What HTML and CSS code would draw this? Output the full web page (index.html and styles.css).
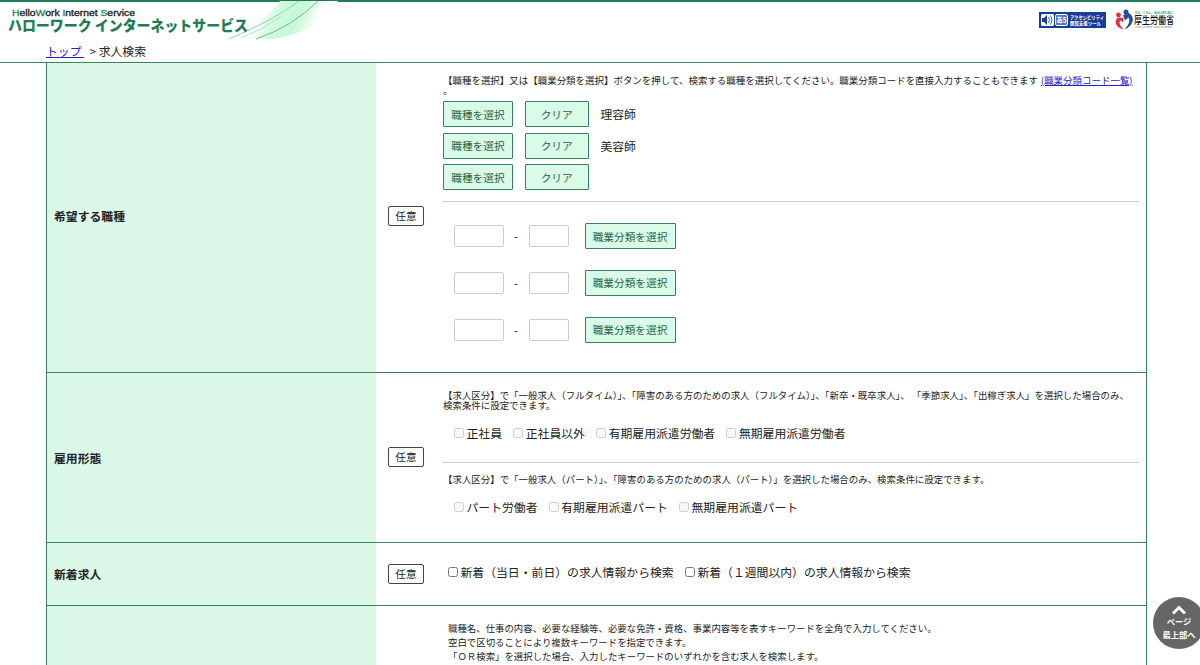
FILE: index.html
```html
<!DOCTYPE html>
<html lang="ja">

<head>
  <meta charset="UTF-8">
  <meta name="viewport" content="width=device-width, initial-scale=1.0">
  <title>求人検索 - ハローワーク インターネットサービス</title>
  <link rel="stylesheet" href="styles.css">
</head>

<body>
  <header class="header">
    <div class="header-top">
      <svg class="site-logo" width="340" height="40" viewBox="0 0 340 40">
        <defs>
          <linearGradient id="wave" gradientUnits="userSpaceOnUse" x1="262" y1="8" x2="312" y2="32">
            <stop offset="0" stop-color="#fff" />
            <stop offset="0.3" stop-color="#d2f9e0" />
            <stop offset="0.65" stop-color="#c6f8d8" />
            <stop offset="1" stop-color="#fff" />
          </linearGradient>
        </defs>
        <path d="M228 38 Q266 20 280 0 H338 Q318 32 272 38 Z" fill="url(#wave)" />
        <g fill="none">
          <path d="M229 38 Q274 19 299 0" stroke="#8fceac" />
          <path d="M241 37 Q262 29 282 15" stroke="#b4e4c8" />
          <path d="M256 38 Q292 26 318 0" stroke="#6fb893" />
        </g>
        <text class="logo-en" x="12" y="15" textLength="123" lengthAdjust="spacingAndGlyphs"><tspan>H</tspan>ello<tspan>W</tspan>ork <tspan>I</tspan>nternet <tspan>S</tspan>ervice</text>
        <text class="logo-ja" x="8" y="30" textLength="240" lengthAdjust="spacingAndGlyphs">ハローワーク インターネットサービス</text>
      </svg>
      <div class="header-links">
        <svg width="67" height="16" viewBox="0 0 67 16">
          <rect width="67" height="16" fill="#173d96" />
          <rect x="2" y="2" width="13" height="12" rx="1.5" fill="#fff" />
          <path d="M3 6h2l3-3v10l-3-3H3z" fill="#173d96" />
          <path d="M9.500 5q2 3 0 6M11.500 3.500q3 4.500 0 9" fill="none" stroke="#173d96" stroke-width="0.8" />
          <rect x="16.500" y="2.500" width="12" height="11" rx="1.500" fill="#5877b8" stroke="#fff" />
          <text class="tool-glyph" x="17.200" y="10.800" textLength="10.500" lengthAdjust="spacingAndGlyphs">あ5</text>
          <text class="tool-text" x="31" y="7" textLength="34" lengthAdjust="spacingAndGlyphs">アクセシビリティ</text>
          <text class="tool-text" x="31" y="12.600" textLength="31" lengthAdjust="spacingAndGlyphs">閲覧支援ツール</text>
        </svg>
        <svg width="60" height="22" viewBox="0 0 60 22">
          <path d="M3 8.500C-2 12 1 19 9 20.500 5 17 3.500 14 5.500 11.500L8 13.500 8.500 9Z" fill="#d9353f" />
          <circle cx="3.500" cy="6" r="2.400" fill="#d9353f" />
          <path d="M14 4C21 9 18 17 9.500 20.500 13.500 16 15.500 12 13.500 8.500L10 11.500 8 6Z" fill="#1d4f9c" />
          <circle cx="11" cy="3" r="2.500" fill="#1d4f9c" />
          <text class="mhlw-small" x="20" y="5" textLength="38" lengthAdjust="spacingAndGlyphs">ひと、くらし、みらいのために</text>
          <text class="mhlw-name" x="19" y="15" textLength="40" lengthAdjust="spacingAndGlyphs">厚生労働省</text>
          <text class="mhlw-en" x="20" y="18.500" textLength="37" lengthAdjust="spacingAndGlyphs">Ministry of Health, Labour and Welfare</text>
        </svg>
      </div>
    </div>
    <nav class="breadcrumb"><a href="#">トップ&thinsp;</a><span>&gt; 求人検索</span></nav>
  </header>

  <main class="form-table">
    <section class="row row-job">
      <h2 class="row-title">希望する職種</h2>
      <div class="row-badge"><span class="badge">任意</span></div>
      <div class="row-body">
        <p class="note">【職種を選択】又は【職業分類を選択】ボタンを押して、検索する職種を選択してください。職業分類コードを直接入力することもできます <a class="code-link" href="#">(職業分類コード一覧)</a><br>。</p>
        <div class="job-list">
          <div class="job"><button class="btn">職種を選択</button><button class="btn btn-clear">クリア</button><span>理容師</span></div>
          <div class="job"><button class="btn">職種を選択</button><button class="btn btn-clear">クリア</button><span>美容師</span></div>
          <div class="job"><button class="btn">職種を選択</button><button class="btn btn-clear">クリア</button></div>
        </div>
        <hr>
        <div class="code-list">
          <div class="code"><input type="text" class="code-large"><span>-</span><input type="text" class="code-small"><button class="btn btn-code">職業分類を選択</button></div>
          <div class="code"><input type="text" class="code-large"><span>-</span><input type="text" class="code-small"><button class="btn btn-code">職業分類を選択</button></div>
          <div class="code"><input type="text" class="code-large"><span>-</span><input type="text" class="code-small"><button class="btn btn-code">職業分類を選択</button></div>
        </div>
      </div>
    </section>

    <section class="row row-type">
      <h2 class="row-title">雇用形態</h2>
      <div class="row-badge"><span class="badge">任意</span></div>
      <div class="row-body">
        <p class="note">【求人区分】で「一般求人（フルタイム）」、「障害のある方のための求人（フルタイム）」、「新卒・既卒求人」、 「季節求人」、「出稼ぎ求人」を選択した場合のみ、<br>検索条件に設定できます。</p>
        <div class="checks">
          <label><input type="checkbox" disabled>正社員</label>
          <label><input type="checkbox" disabled>正社員以外</label>
          <label><input type="checkbox" disabled>有期雇用派遣労働者</label>
          <label><input type="checkbox" disabled>無期雇用派遣労働者</label>
        </div>
        <hr>
        <p class="note">【求人区分】で「一般求人（パート）」、「障害のある方のための求人（パート）」を選択した場合のみ、検索条件に設定できます。</p>
        <div class="checks">
          <label><input type="checkbox" disabled>パート労働者</label>
          <label><input type="checkbox" disabled>有期雇用派遣パート</label>
          <label><input type="checkbox" disabled>無期雇用派遣パート</label>
        </div>
      </div>
    </section>

    <section class="row row-new">
      <h2 class="row-title">新着求人</h2>
      <div class="row-badge"><span class="badge">任意</span></div>
      <div class="row-body">
        <div class="checks">
          <label><input type="checkbox">新着（当日・前日）の求人情報から検索</label>
          <label><input type="checkbox">新着（１週間以内）の求人情報から検索</label>
        </div>
      </div>
    </section>

    <section class="row row-keyword">
      <h2 class="row-title"></h2>
      <div class="row-badge"></div>
      <div class="row-body">
        <p class="keyword-note">職種名、仕事の内容、必要な経験等、必要な免許・資格、事業内容等を表すキーワードを全角で入力してください。<br>空白で区切ることにより複数キーワードを指定できます。<br>「ＯＲ検索」を選択した場合、入力したキーワードのいずれかを含む求人を検索します。</p>
      </div>
    </section>
  </main>

  <a class="page-top" href="#">
    <svg width="16" height="10" viewBox="0 0 16 10">
      <path d="M2 8.500 8 2.500l6 6" fill="none" stroke="#fff" stroke-width="3" />
    </svg>
    <span>ページ<br>最上部へ</span>
  </a>
</body>

</html>
```
FILE: styles.css
```css
* {
  box-sizing: border-box;
}

body {
  margin: 0;
  height: 665px;
  overflow: hidden;
  font-family: "Noto Sans CJK JP", sans-serif;
  font-size: 11.85px;
  line-height: 1.5;
  color: #222;
  background-color: #fff;
}

a {
  color: #2323c8;
}

/* Header */
.header {
  position: relative;
  z-index: 1;
  height: 63px;
  border-top: 2px solid #247a54;
  border-bottom: 1px solid #3b8261;
  background-color: #fff;
}

.header-top {
  display: flex;
  justify-content: space-between;
  height: 40px;
}

.header svg {
  overflow: visible;
}

.site-logo {
  margin-top: -1px;
}

.logo-en {
  font: 9.5px "Liberation Sans", sans-serif;
  fill: #222;
  stroke: #222;
  stroke-width: 0.35px;
}

.logo-en tspan {
  fill: #1e855a;
  stroke: #1e855a;
}

.logo-ja {
  font-size: 14.5px;
  font-weight: 900;
  fill: #1e7d55;
}

.header-links {
  display: flex;
  gap: 9px;
  padding: 7px 25px 0 0;
}

.header-links svg:first-child {
  margin-top: 3px;
}

.tool-glyph {
  font-size: 8px;
  font-weight: bold;
  fill: #fff;
}

.tool-text {
  font-size: 5px;
  font-weight: bold;
  fill: #fff;
}

.mhlw-small {
  font-size: 3px;
  font-weight: bold;
  fill: #2f8a4d;
}

.mhlw-name {
  font-size: 10.5px;
  font-weight: 500;
  fill: #111;
}

.mhlw-en {
  font-size: 2.2px;
  fill: #777;
}

.breadcrumb {
  display: flex;
  gap: 5.5px;
  padding-left: 46px;
  line-height: 17px;
}

/* Search condition table */
.form-table {
  width: 1101px;
  margin: -4px 0 0 46px;
  border: solid #3b8261;
  border-width: 0 1px;
}

.row {
  display: grid;
  grid-template-columns: 329px 67px 696px;
  border-bottom: 1px solid #3b8261;
}

.row-job {
  height: 314px;
}

.row-type {
  height: 170px;
}

.row-new {
  height: 63px;
}

.row-keyword {
  height: 59px;
  border-bottom: 0;
}

.row-title {
  display: flex;
  align-items: center;
  margin: 0;
  padding-left: 7px;
  font-size: 11.85px;
  background-color: #dcf8e9;
}

.row-badge {
  display: flex;
  align-items: center;
  padding-left: 12px;
}

.badge {
  width: 36px;
  height: 20px;
  border: 1px solid #444;
  border-radius: 2px;
  font-size: 10.66px;
  line-height: 18px;
  text-align: center;
}

.row-type .badge {
  margin-bottom: 1px;
}

hr {
  margin: 0;
  border: 0;
  border-top: 1px solid #ccc;
}

.note {
  margin: 0;
  font-size: 9.45px;
  line-height: 10px;
}

.code-link {
  margin-left: 1px;
}

.row-job .row-body {
  padding-top: 16px;
}

.row-job .note {
  font-size: 9.48px;
  white-space: nowrap;
}

.btn {
  width: 70px;
  height: 26px;
  padding: 0;
  border: 1px solid #37805d;
  border-radius: 1px;
  font-family: inherit;
  font-size: 10.66px;
  color: #2a6449;
  background-color: #d9fbe8;
}

.job-list {
  display: grid;
  gap: 5.6px;
  padding: 6px 0 11px;
}

.job {
  display: flex;
  align-items: center;
  gap: 11.7px;
}

.btn-clear {
  width: 64px;
}

.code-list {
  display: grid;
  gap: 20.7px;
  padding: 21px 0 0 10.5px;
}

.code {
  display: flex;
  align-items: center;
}

.code span {
  width: 25px;
  text-align: center;
}

.code input {
  height: 22px;
  padding: 0;
  border: 1px solid #ccc;
  border-radius: 2px;
}

.code-large {
  width: 50px;
}

.code-small {
  width: 40px;
}

.btn-code {
  width: 91px;
  margin-left: 16px;
}

.row-type .row-body {
  padding-top: 17px;
}

.row-type .note {
  white-space: nowrap;
}

.checks {
  display: flex;
  gap: 11.2px;
}

.checks label {
  display: flex;
  align-items: center;
  line-height: 18px;
}

.checks input {
  width: 10px;
  height: 10px;
  margin: 0 2.5px 1px 0;
}

.row-type .checks {
  padding: 14px 0 20px 11px;
}

.row-type hr + .note {
  padding-top: 11px;
}

.row-new .checks {
  padding: 20px 0 0 5px;
}

.row-keyword .row-body {
  padding-top: 15px;
}

.keyword-note {
  margin: 0 0 0 5px;
  font-size: 9.41px;
  line-height: 14.2px;
}

/* Back to top */
.page-top {
  position: fixed;
  left: 1153px;
  bottom: 16px;
  display: flex;
  flex-direction: column;
  align-items: center;
  width: 52px;
  height: 52px;
  padding-top: 8px;
  border-radius: 50%;
  font-size: 8.3px;
  font-weight: bold;
  line-height: 12.5px;
  text-align: center;
  text-decoration: none;
  color: #fff;
  background-color: #666;
}

.page-top span {
  white-space: nowrap;
}
```
